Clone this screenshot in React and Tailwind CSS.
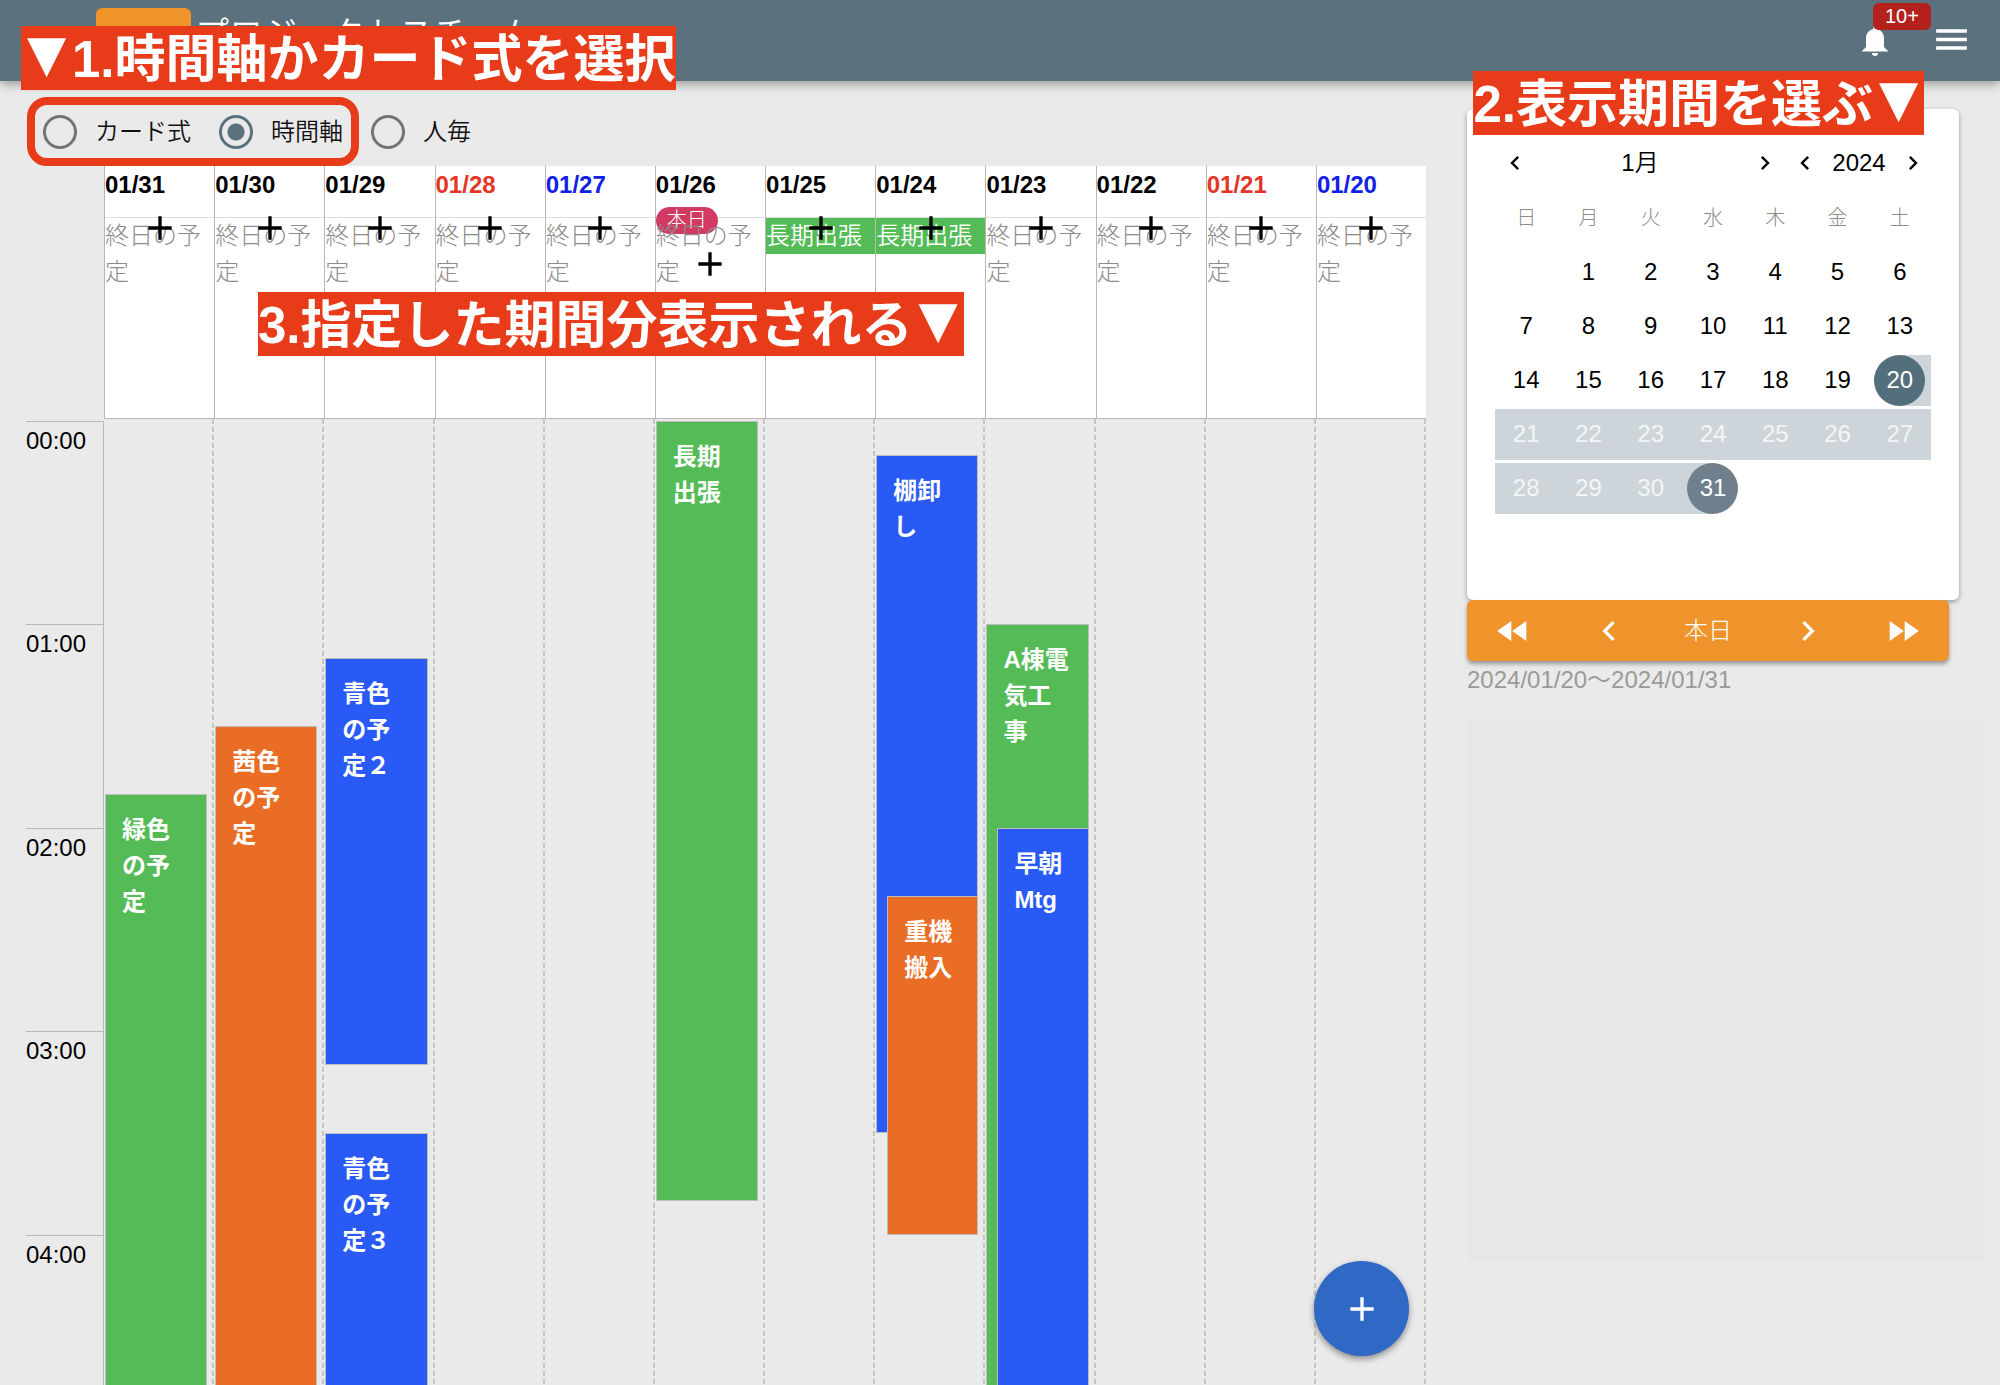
import React from "react";

const HOUR = 203.4;

const DAYS = [
  { date: "01/31", events: [{ title: "緑色の予定", from: 110, to: 400, tone: "green" }] },
  { date: "01/30", events: [{ title: "茜色の予定", from: 90, to: 400, tone: "orange" }] },
  {
    date: "01/29",
    events: [
      { title: "青色の予定２", from: 70, to: 190, tone: "blue" },
      { title: "青色の予定３", from: 210, to: 400, tone: "blue" },
    ],
  },
  { date: "01/28", kind: "sun", events: [] },
  { date: "01/27", kind: "sat", events: [] },
  { date: "01/26", today: true, events: [{ title: "長期出張", from: 0, to: 230, tone: "green" }] },
  { date: "01/25", allDay: "長期出張", events: [] },
  {
    date: "01/24",
    allDay: "長期出張",
    events: [
      { title: "棚卸し", from: 10, to: 210, tone: "blue" },
      { title: "重機搬入", from: 140, to: 240, tone: "orange", inset: true },
    ],
  },
  {
    date: "01/23",
    events: [
      { title: "A棟電気工事", from: 60, to: 400, tone: "green" },
      { title: "早朝Mtg", from: 120, to: 400, tone: "blue", inset: true },
    ],
  },
  { date: "01/22", events: [] },
  { date: "01/21", kind: "sun", events: [] },
  { date: "01/20", kind: "sat", events: [] },
];

const HOURS = ["00:00", "01:00", "02:00", "03:00", "04:00"];

const TONES = {
  green: "bg-[#54bb56]",
  orange: "bg-[#e96d25]",
  blue: "bg-[#2a5af5]",
};

const DATE_COLORS = { sun: "text-[#e53526]", sat: "text-[#1020e8]" };

const PATHS = {
  plus: "M19 13h-6v6h-2v-6H5v-2h6V5h2v6h6v2z",
  left: "M15.41 7.41 14 6l-6 6 6 6 1.41-1.41L10.83 12z",
  right: "M8.59 16.59 10 18l6-6-6-6-1.41 1.41L13.17 12z",
  rewind: "M11.5 12l8.5 6V6M11 18V6l-8.5 6z",
  forward: "M13 6v12l8.5-6M4 18l8.5-6L4 6z",
  menu: "M3 6h18v2H3zM3 11h18v2H3zM3 16h18v2H3z",
  bell: "M14 20a2 2 0 0 1-4 0h4M12 2a1 1 0 0 1 1 1v1.08c2.84.48 5 2.95 5 5.92v6l3 3H3l3-3v-6c0-2.97 2.16-5.44 5-5.92V3a1 1 0 0 1 1-1z",
};

function Icon({ name, className }) {
  return (
    <svg viewBox="0 0 24 24" fill="currentColor" className={className} aria-hidden="true">
      <path d={PATHS[name]} />
    </svg>
  );
}

function Triangle() {
  return (
    <span className="inline-block w-[51px] text-center align-[6px] font-['DejaVu_Sans',sans-serif] leading-none font-normal">▼</span>
  );
}

function Callout({ children, className }) {
  return (
    <div className={`absolute z-30 h-16 whitespace-nowrap bg-[#e83b19] text-[51px] leading-[68px] font-bold text-white ${className}`}>
      {children}
    </div>
  );
}

function Header() {
  return (
    <header className="relative z-10 flex h-[81px] items-start justify-between bg-[#5b717d] pl-24 text-white shadow-[0_3px_10px_rgba(0,0,0,0.35)]">
      <div className="flex items-start gap-1 pt-2">
        <button type="button" aria-label="ホーム" className="h-14 w-[95px] rounded-md bg-[#ef932b]" />
        <h1 className="pt-1 text-[34px] leading-[44px] font-[350]">プロジェクトスチーム</h1>
      </div>
      <div className="flex items-start gap-[38px] pt-[19px] pr-7">
        <button type="button" aria-label="通知" className="relative pt-1">
          <Icon name="bell" className="size-9" />
          <span className="absolute -top-4 left-4 rounded-md bg-[#b3211d] px-3 text-[20px] leading-[27px]">10+</span>
        </button>
        <button type="button" aria-label="メニュー">
          <Icon name="menu" className="size-[41px]" />
        </button>
      </div>
      <Callout className="top-[26px] left-[21px]">
        <Triangle />
        1.時間軸かカード式を選択
      </Callout>
      <Callout className="top-[71px] right-[76px]">
        2.表示期間を選ぶ
        <Triangle />
      </Callout>
    </header>
  );
}

function ViewOption({ label, checked }) {
  return (
    <label className="flex items-center gap-[18px] text-[24px] leading-9 font-[350] text-[#111]">
      <input
        type="radio"
        name="view"
        defaultChecked={checked}
        className="size-[34px] appearance-none rounded-full border-[3px] border-[#757575] checked:border-[#5b717d] checked:bg-[radial-gradient(circle,#5b717d_8px,transparent_9px)]"
      />
      {label}
    </label>
  );
}

function ViewSwitch() {
  return (
    <div className="flex items-center gap-3 pt-4 pl-[27px]">
      <div className="flex h-[69px] items-center gap-7 rounded-[20px] border-8 border-[#e83b19] px-2">
        <ViewOption label="カード式" />
        <ViewOption label="時間軸" checked />
      </div>
      <ViewOption label="人毎" />
    </div>
  );
}

function DayHead({ day }) {
  return (
    <div className="h-[253px] min-w-0 flex-1 border-b border-l border-[#b8b8b8] bg-white">
      <div className={`h-[52px] border-b border-[#dcdcdc] text-[24px] leading-[38px] font-bold ${DATE_COLORS[day.kind] || "text-black"}`}>
        {day.date}
      </div>
      <div className="relative text-[24px] leading-9">
        {day.today && (
          <span className="absolute -top-[11px] left-0 rounded-full bg-[#d03a63] px-[11px] text-[20px] leading-[27px] font-light text-white">
            本日
          </span>
        )}
        {day.allDay ? (
          <p className="relative bg-[#54bb56] font-[350] whitespace-nowrap text-white">{day.allDay}</p>
        ) : (
          <p className="relative font-light text-[#8c8c8c]">終日の予定</p>
        )}
        <button
          type="button"
          aria-label={`${day.date}に終日の予定を追加`}
          className={`absolute inset-x-0 flex justify-center text-black ${day.today ? "top-[26px]" : "-top-[10px]"}`}
        >
          <Icon name="plus" className="size-10" />
        </button>
      </div>
    </div>
  );
}

function Event({ event }) {
  return (
    <button
      type="button"
      className={`absolute right-[5px] flex items-start border border-[#bdbdbd] pt-[17px] pr-[14px] pl-4 text-left text-[24px] leading-9 font-bold text-white ${TONES[event.tone]} ${event.inset ? "left-3" : "left-px"}`}
      style={{ top: (event.from / 60) * HOUR, height: ((event.to - event.from) / 60) * HOUR }}
    >
      {event.title}
    </button>
  );
}

function Timeline() {
  return (
    <section className="relative min-w-0 flex-1">
      <Callout className="top-[126px] left-[232px]">
        3.指定した期間分表示される
        <Triangle />
      </Callout>
      <div className="flex pl-[78px]">
        {DAYS.map((day) => (
          <DayHead key={day.date} day={day} />
        ))}
      </div>
      <div className="flex h-[966px] overflow-hidden">
        <div className="mt-[2px] w-[78px] shrink-0 border-r border-[#b8b8b8] text-[24px] text-black">
          {HOURS.map((hour) => (
            <div key={hour} className="border-t border-[#b8b8b8] leading-[38px]" style={{ height: HOUR }}>
              {hour}
            </div>
          ))}
        </div>
        {DAYS.map((day) => (
          <div
            key={day.date}
            className="min-w-0 flex-1 bg-[linear-gradient(to_bottom,#c6c6c6_5px,transparent_5px)] bg-[length:2px_8px] bg-right-top bg-repeat-y pt-[2px] pr-[2px]"
          >
            <div className="relative">
              {day.events.map((event) => (
                <Event key={event.title} event={event} />
              ))}
            </div>
          </div>
        ))}
      </div>
    </section>
  );
}

const WEEKS = [
  [null, 1, 2, 3, 4, 5, 6],
  [7, 8, 9, 10, 11, 12, 13],
  [14, 15, 16, 17, 18, 19, 20],
  [21, 22, 23, 24, 25, 26, 27],
  [28, 29, 30, 31, null, null, null],
];

function DayCell({ day }) {
  let band = "";
  let mark = "text-black";
  if (day === 20) {
    band = "bg-[linear-gradient(to_right,transparent_50%,#ced5da_50%)]";
    mark = "bg-[#536f7b] text-white";
  } else if (day === 31) {
    band = "bg-[linear-gradient(to_left,transparent_50%,#ced5da_50%)]";
    mark = "bg-[#6f808c] text-white";
  } else if (day > 20) {
    band = "bg-[#ced5da]";
    mark = "text-[#f3f5f6]";
  }
  return (
    <td className="h-[54px] p-0">
      {day && (
        <div className={`flex justify-center ${band}`}>
          <button type="button" className={`size-[51px] rounded-full text-[24px] ${mark}`}>
            {day}
          </button>
        </div>
      )}
    </td>
  );
}

function NavButton({ name, label }) {
  return (
    <button type="button" aria-label={label} className="flex size-7 items-center justify-center">
      <Icon name={name} className="size-7" />
    </button>
  );
}

function Sidebar() {
  return (
    <aside className="w-[533px] shrink-0 pr-[15px]">
      <div className="mr-[26px] h-[491px] rounded-md bg-white px-7 pt-9 shadow-[0_2px_5px_rgba(0,0,0,0.35)]">
        <div className="flex items-center pr-1 pl-[6px] text-[24px] leading-9 font-[350] text-black">
          <NavButton name="left" label="前の月" />
          <span className="flex-1 text-center">1月</span>
          <NavButton name="right" label="次の月" />
          <span className="w-3" />
          <NavButton name="left" label="前の年" />
          <span className="basis-20 text-center">2024</span>
          <NavButton name="right" label="次の年" />
        </div>
        <table className="mt-[14px] w-full table-fixed border-collapse">
          <thead>
            <tr>
              {["日", "月", "火", "水", "木", "金", "土"].map((name) => (
                <th key={name} scope="col" className="h-[50px] p-0 pb-1 text-[20px] font-light text-[#8c8c8c]">
                  {name}
                </th>
              ))}
            </tr>
          </thead>
          <tbody>
            {WEEKS.map((week, i) => (
              <tr key={i}>
                {week.map((day, j) => (
                  <DayCell key={j} day={day} />
                ))}
              </tr>
            ))}
          </tbody>
        </table>
      </div>
      <div className="mr-9 flex h-[61px] items-center justify-between rounded-md bg-[#ef932b] px-[26px] text-[24px] font-light text-white shadow-[0_3px_4px_rgba(0,0,0,0.35)]">
        <button type="button" aria-label="前の期間">
          <Icon name="rewind" className="size-10" />
        </button>
        <button type="button" aria-label="前の日">
          <Icon name="left" className="size-10" />
        </button>
        <button type="button">本日</button>
        <button type="button" aria-label="次の日">
          <Icon name="right" className="size-10" />
        </button>
        <button type="button" aria-label="次の期間">
          <Icon name="forward" className="size-10" />
        </button>
      </div>
      <p className="text-[24px] leading-[38px] text-[#9a9a9a]">2024/01/20〜2024/01/31</p>
      <div className="mt-5 h-[542px] bg-[#e7e7e7]" />
    </aside>
  );
}

export default function App() {
  return (
    <div className="relative h-screen overflow-hidden bg-[#eaeaea] font-['Liberation_Sans','Noto_Sans_CJK_JP',sans-serif]">
      <Header />
      <div className="flex">
        <div className="min-w-0 flex-1">
          <ViewSwitch />
          <div className="pr-[41px] pl-[26px]">
            <Timeline />
          </div>
        </div>
        <div className="pt-7">
          <Sidebar />
        </div>
      </div>
      <button
        type="button"
        aria-label="予定を追加"
        className="absolute right-[591px] bottom-[29px] z-30 flex size-[95px] items-center justify-center rounded-full bg-[#2f68c5] text-white shadow-[0_3px_6px_rgba(0,0,0,0.4)]"
      >
        <Icon name="plus" className="size-10" />
      </button>
    </div>
  );
}
